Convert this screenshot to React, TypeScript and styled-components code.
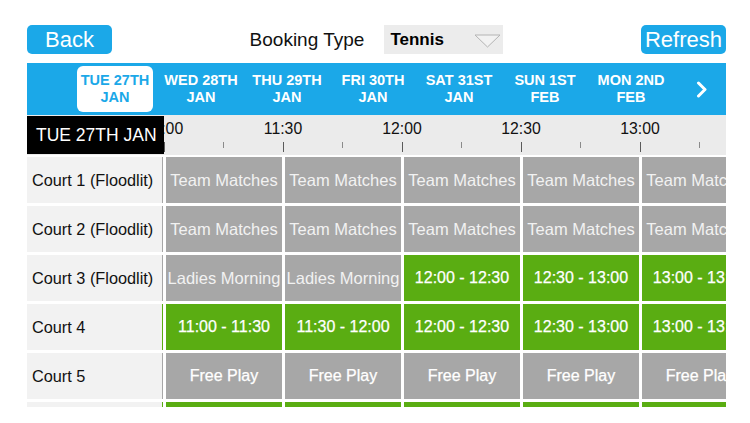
import React, { FC } from "react";
import styled, { createGlobalStyle, css } from "styled-components";

const BLUE = "#1ba8e8";
const GREEN = "#5aad12";
const GREY = "#a7a7a7";

type Kind = "grey" | "green";
type Cell = { kind: Kind; text: string; strong?: boolean };

const dates = [
  ["TUE 27TH", "JAN"],
  ["WED 28TH", "JAN"],
  ["THU 29TH", "JAN"],
  ["FRI 30TH", "JAN"],
  ["SAT 31ST", "JAN"],
  ["SUN 1ST", "FEB"],
  ["MON 2ND", "FEB"],
];

const times = ["10:30", "11:00", "11:30", "12:00", "12:30", "13:00", "13:30"];

const team: Cell = { kind: "grey", text: "Team Matches" };
const ladies: Cell = { kind: "grey", text: "Ladies Morning" };
const free: Cell = { kind: "grey", text: "Free Play", strong: true };
const slot = (text: string): Cell => ({ kind: "green", text, strong: true });
const blankGrey: Cell = { kind: "grey", text: "" };
const blankGreen: Cell = { kind: "green", text: "" };

const openSlots = [
  slot("11:00 - 11:30"),
  slot("11:30 - 12:00"),
  slot("12:00 - 12:30"),
  slot("12:30 - 13:00"),
  slot("13:00 - 13:30"),
];

const courts: { name: string; cells: Cell[] }[] = [
  { name: "Court 1 (Floodlit)", cells: [blankGrey, team, team, team, team, team] },
  { name: "Court 2 (Floodlit)", cells: [blankGrey, team, team, team, team, team] },
  {
    name: "Court 3 (Floodlit)",
    cells: [blankGrey, ladies, ladies, slot("12:00 - 12:30"), slot("12:30 - 13:00"), slot("13:00 - 13:30")],
  },
  { name: "Court 4", cells: [blankGreen, ...openSlots] },
  { name: "Court 5", cells: [blankGrey, free, free, free, free, free] },
  { name: "Court 6", cells: [blankGreen, ...openSlots] },
];

const App: FC = () => {
  return (
    <>
      <GlobalStyle />
      <Screen>
        <TopBar>
          <BlueButton>Back</BlueButton>
          <TypePicker>
            <PickerLabel>Booking Type</PickerLabel>
            <Select>
              <span>Tennis</span>
              <svg width="27" height="14" viewBox="0 0 27 14">
                <polygon points="1,1 26,1 13.5,13" fill="#f2f2f2" stroke="#b4b4b4" strokeWidth="1" />
              </svg>
            </Select>
          </TypePicker>
          <BlueButton>Refresh</BlueButton>
        </TopBar>

        <DateBar>
          {dates.map(([day, month], i) => (
            <DateCol key={day}>
              <DateTile $active={i === 0}>
                <span>{day}</span>
                <span>{month}</span>
              </DateTile>
            </DateCol>
          ))}
          <Next>
            <svg width="12" height="17" viewBox="0 0 12 17">
              <polyline
                points="2.5,2 9,8.5 2.5,15"
                fill="none"
                stroke="#fff"
                strokeWidth="3"
                strokeLinecap="round"
                strokeLinejoin="round"
              />
            </svg>
          </Next>
        </DateBar>

        <TimeHeader>
          <TimeTrack>
            {times.map((t) => (
              <TimeSlot key={t}>
                <TimeLabel>{t}</TimeLabel>
              </TimeSlot>
            ))}
          </TimeTrack>
          <DayBadge>TUE 27TH JAN</DayBadge>
        </TimeHeader>

        <Body>
          {courts.map((court) => (
            <Row key={court.name}>
              <CourtName>{court.name}</CourtName>
              <CellClip>
                <CellTrack>
                  {court.cells.map((c, i) => (
                    <SlotCell key={i} $kind={c.kind} $strong={c.strong}>
                      {c.text}
                    </SlotCell>
                  ))}
                </CellTrack>
              </CellClip>
            </Row>
          ))}
        </Body>
      </Screen>
    </>
  );
};

export default App;

const GlobalStyle = createGlobalStyle`
  body {
    margin: 0;
    background: #fff;
    font-family: "Liberation Sans", Arial, Helvetica, sans-serif;
  }
`;

const Screen = styled.div`
  width: 699px;
  padding: 25px 0 0 27px;
`;

const TopBar = styled.div`
  display: flex;
  justify-content: space-between;
  align-items: center;
  height: 29px;
`;

const BlueButton = styled.button`
  width: 85px;
  height: 29px;
  padding: 0;
  border: none;
  border-radius: 5px;
  background: ${BLUE};
  color: #fff;
  font-family: inherit;
  font-size: 22px;
  line-height: 29px;
`;

const TypePicker = styled.div`
  display: flex;
  align-items: center;
  gap: 20px;
`;

const PickerLabel = styled.span`
  font-size: 19px;
  color: #111;
`;

const Select = styled.div`
  width: 119px;
  height: 29px;
  box-sizing: border-box;
  padding: 0 2px 0 6px;
  display: flex;
  align-items: center;
  justify-content: space-between;
  background: #ececec;
  font-size: 17px;
  font-weight: bold;
  color: #000;

  svg {
    margin-top: 2px;
  }
`;

const DateBar = styled.div`
  display: flex;
  height: 52px;
  margin-top: 9px;
  padding-left: 45px;
  background: ${BLUE};
`;

const DateCol = styled.div`
  width: 86px;
  flex-shrink: 0;
  padding: 3px 5px;
  box-sizing: border-box;
`;

const DateTile = styled.div<{ $active?: boolean }>`
  height: 100%;
  display: flex;
  flex-direction: column;
  align-items: center;
  justify-content: center;
  border-radius: 6px;
  font-size: 14.5px;
  font-weight: bold;
  line-height: 17px;
  white-space: nowrap;
  color: #fff;
  ${({ $active }) =>
    $active &&
    css`
      background: #fff;
      color: ${BLUE};
    `}
`;

const Next = styled.div`
  flex: 1;
  display: flex;
  align-items: center;
  justify-content: center;
  padding-left: 4px;
`;

const TimeHeader = styled.div`
  position: relative;
  height: 40px;
  background: #ebebeb;
  overflow: hidden;
`;

const TimeTrack = styled.div`
  display: flex;
  padding-left: 18px;
  height: 100%;
`;

const TimeSlot = styled.div`
  position: relative;
  width: 119px;
  flex-shrink: 0;

  &::before,
  &::after {
    content: "";
    position: absolute;
    top: 27px;
    width: 1px;
    background: #5a5a5a;
  }
  &::before {
    left: 0;
    height: 10px;
  }
  &::after {
    left: 59px;
    height: 6px;
    background: #8a8a8a;
  }
`;

const TimeLabel = styled.div`
  display: inline-block;
  margin-top: 5px;
  transform: translateX(-50%);
  font-size: 15.8px;
  color: #111;
`;

const DayBadge = styled.div`
  position: absolute;
  left: 0;
  top: 1px;
  width: 137px;
  height: 38px;
  box-sizing: border-box;
  padding-left: 9px;
  display: flex;
  align-items: center;
  background: #000;
  color: #fff;
  font-size: 17.5px;
  white-space: nowrap;
`;

const Body = styled.div`
  margin-top: 2px;
  height: 250px;
  overflow: hidden;
  display: flex;
  flex-direction: column;
  gap: 3px;
`;

const Row = styled.div`
  display: flex;
  height: 46px;
  flex-shrink: 0;
`;

const CourtName = styled.div`
  width: 135px;
  flex-shrink: 0;
  box-sizing: border-box;
  padding-left: 5px;
  display: flex;
  align-items: center;
  background: #f2f2f2;
  font-size: 16.3px;
  color: #111;
  white-space: nowrap;
`;

const CellClip = styled.div`
  flex: 1;
  overflow: hidden;
`;

const CellTrack = styled.div`
  display: flex;
  gap: 3px;
  height: 100%;
  margin-left: -115px;
`;

const SlotCell = styled.div<{ $kind: Kind; $strong?: boolean }>`
  width: 116px;
  flex-shrink: 0;
  display: flex;
  align-items: center;
  justify-content: center;
  overflow: hidden;
  white-space: nowrap;
  font-size: ${({ $strong }) => ($strong ? "16px" : "16.5px")};
  color: ${({ $strong }) => ($strong ? "#fff" : "#f2f2f2")};
  -webkit-text-stroke: ${({ $strong }) => ($strong ? "0.25px #fff" : "0")};
  background: ${({ $kind }) => ($kind === "green" ? GREEN : GREY)};
`;
